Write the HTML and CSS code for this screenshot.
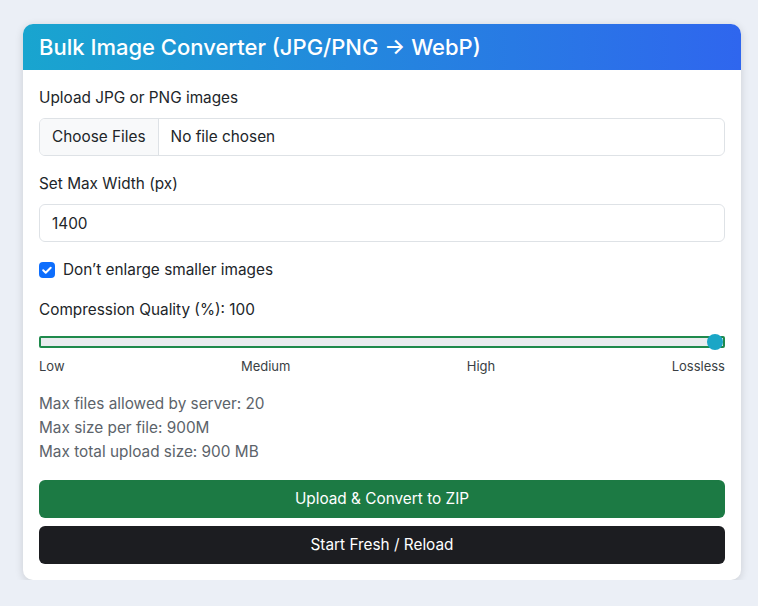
FILE: index.html
```html
<!DOCTYPE html>
<html lang="en">
<head>
    <meta charset="UTF-8">
    <meta name="viewport" content="width=device-width, initial-scale=1.0">
    <title>Bulk Image Converter</title>
    <link rel="stylesheet" href="styles.css">
</head>
<body>

    <!-- Main converter card -->
    <div class="card">
        <div class="card-header">
            <h4>Bulk Image Converter (JPG/PNG → WebP)</h4>
        </div>
        <div class="card-body">
            <div class="field">
                <label class="form-label">Upload JPG or PNG images</label>
                <div class="file-input">
                    <span class="file-btn">Choose Files</span>
                    <span class="file-name">No file chosen</span>
                </div>
            </div>

            <div class="field">
                <label class="form-label">Set Max Width (px)</label>
                <input type="text" class="form-control" value="1400">
            </div>

            <div class="field check-row">
                <span class="check-box">
                    <svg viewBox="0 0 16 16" width="16" height="16">
                        <path d="M4.2 8.3l2.5 2.4 5-5" fill="none" stroke="#fff" stroke-width="2" stroke-linecap="round" stroke-linejoin="round"/>
                    </svg>
                </span>
                <span>Don’t enlarge smaller images</span>
            </div>

            <div class="field">
                <label class="form-label">Compression Quality (%): <span id="quality-value">100</span></label>
                <input type="range" class="quality-range" min="0" max="100" value="100">
                <div class="range-labels">
                    <span>Low</span>
                    <span>Medium</span>
                    <span>High</span>
                    <span>Lossless</span>
                </div>
            </div>

            <div class="server-info">
                <div>Max files allowed by server: 20</div>
                <div>Max size per file: 900M</div>
                <div>Max total upload size: 900 MB</div>
            </div>

            <div class="actions">
                <button class="btn btn-success">Upload &amp; Convert to ZIP</button>
                <button class="btn btn-dark">Start Fresh / Reload</button>
            </div>
        </div>
    </div>

</body>
</html>
```

FILE: styles.css
```css
/* General page styling */
body {
    margin: 0;
    font-family: "Inter", "Liberation Sans", sans-serif;
    font-size: 15.35px;
    line-height: 24px;
    color: #212529;
    background-color: #ebeff6;
}

/* --- Card --- */
.card {
    width: 718px;
    margin: 24px 0 0 23px;
    background: #fff;
    border-radius: 10px;
    box-shadow: 0 2px 8px rgba(0, 0, 0, 0.14);
    overflow: hidden;
}

.card-header {
    height: 46px;
    display: flex;
    align-items: center;
    padding: 0 16px;
    background: linear-gradient(90deg, #19a5cf, #2f66ee);
    color: #fff;
}

.card-header h4 {
    margin: 0;
    font-size: 22px;
    font-weight: 500;
}

.card-body {
    padding: 16px;
}

.field {
    margin-bottom: 16px;
}

.form-label {
    display: block;
    margin-bottom: 8px;
}

/* --- Inputs --- */
.file-input,
.form-control {
    box-sizing: border-box;
    width: 100%;
    height: 38px;
    border: 1px solid #dee2e6;
    border-radius: 6px;
    font: inherit;
    color: #212529;
}

.file-input {
    display: flex;
    align-items: center;
    overflow: hidden;
}

.file-btn {
    height: 100%;
    display: flex;
    align-items: center;
    padding: 0 12px;
    background: #f8f9fa;
    border-right: 1px solid #dee2e6;
}

.file-name {
    padding-left: 12px;
}

.form-control {
    display: block;
    padding: 0 12px;
    outline: none;
}

/* --- Checkbox --- */
.check-row {
    display: flex;
    align-items: center;
    gap: 8px;
}

.check-box {
    width: 16px;
    height: 16px;
    border-radius: 4px;
    background: #0d6efd;
    display: flex;
}

/* --- Range slider --- */
.quality-range {
    -webkit-appearance: none;
    appearance: none;
    display: block;
    width: 100%;
    height: 24px;
    margin: 0;
    background: transparent;
}

.quality-range::-webkit-slider-runnable-track {
    height: 12px;
    box-sizing: border-box;
    background: #e9ecef;
    border: 2px solid #1f8a4c;
    border-radius: 2px;
}

.quality-range::-webkit-slider-thumb {
    -webkit-appearance: none;
    appearance: none;
    width: 16px;
    height: 16px;
    margin-top: -4px;
    border-radius: 50%;
    background: #1aa6c6;
    border: none;
}

.range-labels {
    display: flex;
    justify-content: space-between;
    font-size: 13px;
    line-height: 20px;
    margin-top: 2px;
    color: #3a3f44;
}

/* --- Server limits --- */
.server-info {
    color: #5c636a;
    margin-bottom: 16px;
}

/* --- Buttons --- */
.actions {
    display: flex;
    flex-direction: column;
    gap: 8px;
}

.btn {
    height: 38px;
    border: none;
    border-radius: 6px;
    font: inherit;
    color: #fff;
    cursor: pointer;
}

.btn-success {
    background: #1c7a44;
}

.btn-dark {
    background: #1c1d21;
}
```
